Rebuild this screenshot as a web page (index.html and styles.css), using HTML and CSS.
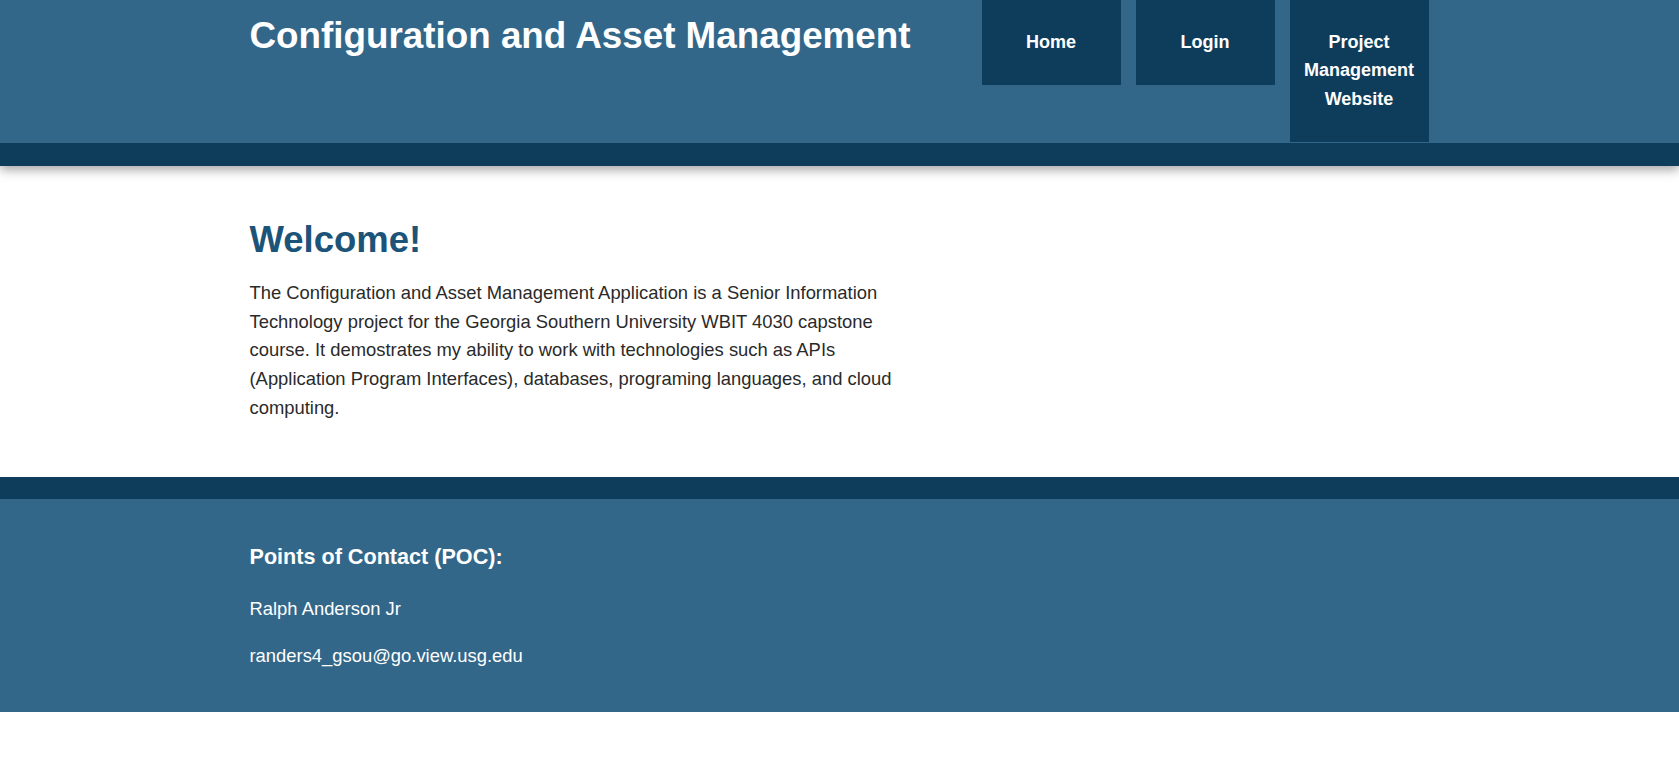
FILE: index.html
```html
<!DOCTYPE html>
<html lang="en">
<head>
<meta charset="utf-8">
<title>Configuration and Asset Management</title>
<link rel="stylesheet" href="styles.css">
</head>
<body>
<header class="site-header">
  <div class="container header-inner">
    <h1 class="site-title">Configuration and Asset Management</h1>
    <nav class="main-nav">
      <a class="nav-item" href="#">Home</a>
      <a class="nav-item" href="#">Login</a>
      <a class="nav-item" href="#">Project Management Website</a>
    </nav>
  </div>
</header>
<main class="main">
  <div class="container">
    <h2 class="welcome-title">Welcome!</h2>
    <p class="welcome-text">The Configuration and Asset Management Application is a Senior Information Technology project for the Georgia Southern University WBIT 4030 capstone course. It demostrates my ability to work with technologies such as APIs (Application Program Interfaces), databases, programing languages, and cloud computing.</p>
  </div>
</main>
<footer class="site-footer">
  <div class="container">
    <h3 class="footer-title">Points of Contact (POC):</h3>
    <p class="footer-line">Ralph Anderson Jr</p>
    <p class="footer-line">randers4_gsou@go.view.usg.edu</p>
  </div>
</footer>
</body>
</html>
```
FILE: styles.css
```css
* { box-sizing: border-box; }

body {
  margin: 0;
  font-family: "Liberation Sans", Arial, sans-serif;
  font-size: 18px;
  line-height: 1.6;
  color: #2a2a2a;
  background: #ffffff;
}

.container {
  width: 1180px;
  margin: 0 auto;
}

.site-header {
  position: relative;
  z-index: 2;
  background: #33678a;
  border-bottom: 23px solid #0e3d5c;
  box-shadow: 0 4px 10px rgba(0, 0, 0, 0.35);
}

.header-inner {
  display: flex;
  justify-content: space-between;
  align-items: flex-start;
  height: 143px;
}

.site-title {
  margin: 14px 0 0;
  font-size: 36.8px;
  line-height: 1.2;
  font-weight: bold;
  color: #ffffff;
}

.main-nav {
  display: flex;
  gap: 15px;
  align-items: flex-start;
  margin-right: 1px;
}

.nav-item {
  display: block;
  width: 139px;
  padding: 27.5px 0 28.5px;
  background: #0e3d5c;
  color: #ffffff;
  font-weight: bold;
  text-align: center;
  text-decoration: none;
  line-height: 28.8px;
}

.main {
  padding: 52px 0 54px;
}

.welcome-title {
  margin: 0 0 17px;
  font-size: 36.5px;
  line-height: 1.2;
  font-weight: bold;
  color: #1c5378;
}

.welcome-text {
  margin: 0;
  width: 660px;
  font-size: 18.4px;
  line-height: 28.8px;
}

.site-footer {
  background: #33678a;
  border-top: 22px solid #0e3d5c;
  color: #ffffff;
  padding: 45px 0 41px;
}

.footer-title {
  margin: 0 0 25px;
  font-size: 21.6px;
  line-height: 1.2;
  font-weight: bold;
}

.footer-line {
  margin: 0 0 19px;
  font-size: 18.4px;
  line-height: 28.8px;
}

.footer-line:last-child {
  margin-bottom: 0;
}
```
